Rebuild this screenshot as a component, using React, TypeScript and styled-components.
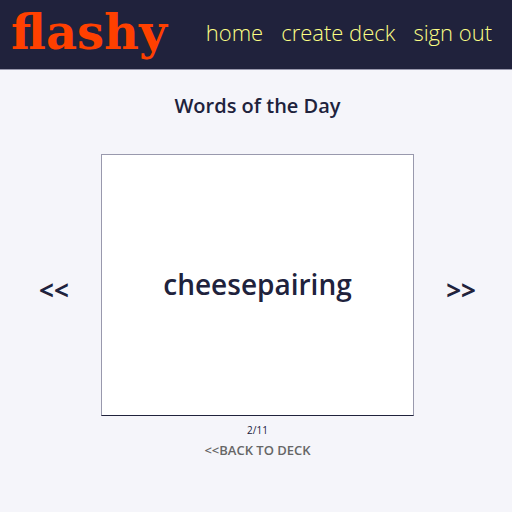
import React from "react";
import styled, { createGlobalStyle } from "styled-components";

const GlobalStyle = createGlobalStyle`
  * { box-sizing: border-box; }
  body {
    margin: 0;
    min-height: 100vh;
    background: #f5f5fa;
    color: #20223c;
    font-family: "Open Sans", "Noto Sans", sans-serif;
  }
`;

const Header = styled.header`
  display: flex;
  align-items: center;
  justify-content: space-between;
  padding: 2px 20px 7px 11px;
  border-bottom: 1px solid #9999ad;
  background: #20223c;
`;

const Logo = styled.a`
  color: #ff4000;
  font: bold 48px/60px "DejaVu Serif", serif;
  text-decoration: none;
`;

const Nav = styled.nav`
  display: flex;
  gap: 18px;
`;

const NavLink = styled.a`
  color: #fcfe84;
  font-size: 22px;
  font-weight: 340;
  line-height: 28px;
  text-decoration: none;
  white-space: nowrap;
`;

const Main = styled.main`
  display: flex;
  flex-direction: column;
  align-items: center;
  padding: 20px 0 0 3px;
`;

const Title = styled.h1`
  margin: 0;
  font-size: 20px;
  line-height: 32px;
  font-weight: 600;
`;

const Viewer = styled.section`
  display: grid;
  grid-template-columns: 1fr auto 1fr;
  align-items: center;
  width: 100%;
  margin-top: 32px;
  padding: 0 4px;
`;

const Arrow = styled.button`
  justify-self: center;
  padding: 10px 0 0;
  border: 0;
  background: none;
  color: inherit;
  font: 700 26px/32px "Open Sans", sans-serif;
  cursor: pointer;
`;

const Card = styled.button`
  width: 61.2vw;
  height: 262px;
  padding: 0 0 2px;
  border: 1px solid #9999ad;
  border-bottom-color: #20223c;
  background: #ffffff;
  color: inherit;
  font: 600 28px/40px "Open Sans", sans-serif;
  cursor: pointer;
`;

const Counter = styled.p`
  margin: 8px 0 0;
  font-size: 10px;
  line-height: 12px;
`;

const BackLink = styled.a`
  margin-top: 5px;
  color: #666666;
  font-size: 13px;
  line-height: 18px;
  font-weight: 600;
  text-decoration: none;
`;

export default function App() {
  return (
    <>
      <GlobalStyle />
      <Header>
        <Logo href="#">flashy</Logo>
        <Nav>
          <NavLink href="#">home</NavLink>
          <NavLink href="#">create deck</NavLink>
          <NavLink href="#">sign out</NavLink>
        </Nav>
      </Header>
      <Main>
        <Title>Words of the Day</Title>
        <Viewer>
          <Arrow aria-label="Previous card">&lt;&lt;</Arrow>
          <Card>cheesepairing</Card>
          <Arrow aria-label="Next card">&gt;&gt;</Arrow>
        </Viewer>
        <Counter>2/11</Counter>
        <BackLink href="#">&lt;&lt;BACK TO DECK</BackLink>
      </Main>
    </>
  );
}
